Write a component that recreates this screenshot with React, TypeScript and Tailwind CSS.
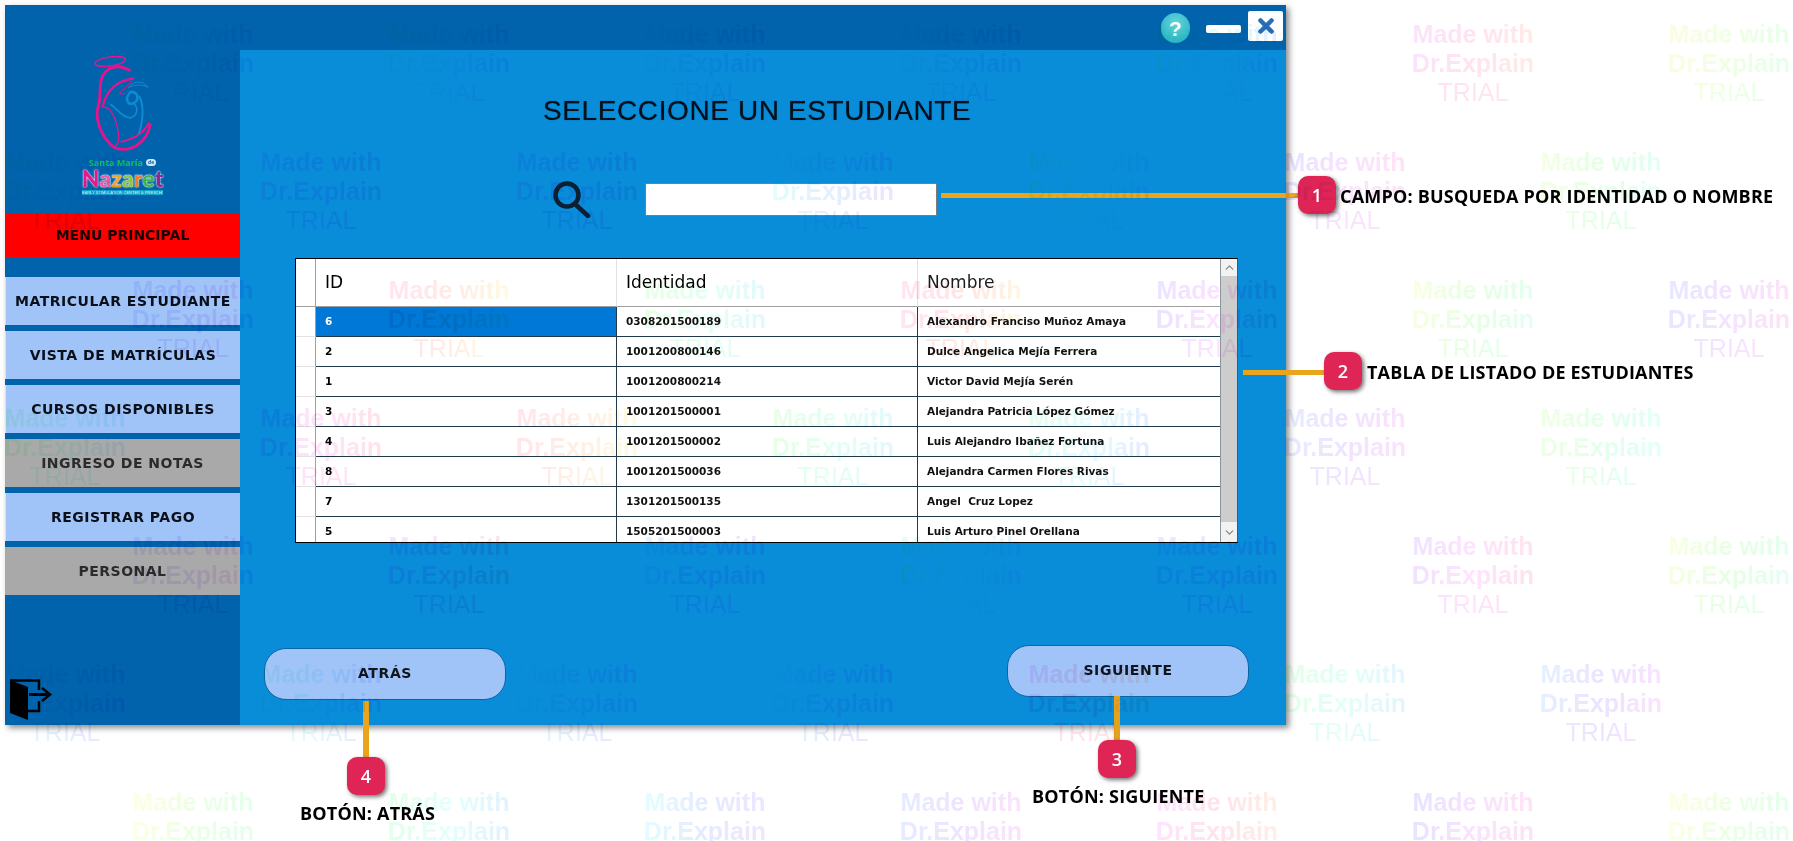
import { ChevronUp, ChevronDown, X } from "lucide-react";

const menu = [
  { label: "MATRICULAR ESTUDIANTE", on: true },
  { label: "VISTA DE MATRÍCULAS", on: true },
  { label: "CURSOS DISPONIBLES", on: true },
  { label: "INGRESO DE NOTAS", on: false },
  { label: "REGISTRAR PAGO", on: true },
  { label: "PERSONAL", on: false },
];

const rows = [
  ["6", "0308201500189", "Alexandro Franciso Muñoz Amaya"],
  ["2", "1001200800146", "Dulce Angelica Mejía Ferrera"],
  ["1", "1001200800214", "Victor David Mejía Serén"],
  ["3", "1001201500001", "Alejandra Patricia López Gómez"],
  ["4", "1001201500002", "Luis Alejandro Ibañez Fortuna"],
  ["8", "1001201500036", "Alejandra Carmen Flores Rivas"],
  ["7", "1301201500135", "Angel\u00a0\u00a0Cruz Lopez"],
  ["5", "1505201500003", "Luis Arturo Pinel Orellana"],
];

const nazaret: [string, string][] = [
  ["N", "text-[#e6178f]"],
  ["a", "text-[#ee5aa5]"],
  ["z", "text-[#f2a22c]"],
  ["a", "text-[#8cc63f]"],
  ["r", "text-[#ef7f22]"],
  ["e", "text-[#3fb54a]"],
  ["t", "text-[#92278f]"],
];

const hues = [
  [150, 150, 170, 170, 140, 290, 50],
  [150, 230, 230, 170, 130, 240, 80],
  [220, 330, 110, 320, 250, 70, 230],
  [120, 270, 340, 110, 140, 220, 90],
  [220, 270, 200, 130, 220, 260, 70],
  [170, 150, 170, 180, 300, 120, 210],
  [60, 130, 180, 220, 300, 240, 60],
];

function Logo() {
  return (
    <div className="flex flex-col items-center pt-[44px] h-[209px]">
      <svg width="64" height="105" viewBox="90 30 200 320" fill="none" strokeLinecap="round">
        <g stroke="#e6148c">
          <ellipse cx="150" cy="65" rx="48" ry="14" strokeWidth="5" transform="rotate(-8 150 65)" />
          <path d="M210 92 C172 70 132 84 122 122 C115 150 122 180 112 207 C102 245 120 292 152 325 C172 345 208 344 236 325 C256 311 270 292 275 262" strokeWidth="9" />
          <path d="M222 118 C182 124 144 142 128 200" strokeWidth="7" />
          <path d="M122 206 C152 204 168 240 176 290 C179 310 173 326 163 333" strokeWidth="4" />
          <path d="M184 316 C214 310 250 296 270 258" strokeWidth="6" />
          <path d="M220 120 C210 138 194 152 178 165 C186 168 192 167 199 163" strokeWidth="3" />
        </g>
        <g stroke="#0f8bd6">
          <path d="M208 146 C216 126 256 122 268 146 C254 136 224 136 208 146" strokeWidth="3" />
          <path d="M208 168 C196 184 206 202 222 196 C238 190 240 170 226 162 C218 158 212 160 208 168" strokeWidth="8" />
          <path d="M152 200 C172 212 188 242 214 241 C238 232 236 208 226 198" strokeWidth="5" />
          <path d="M241 174 C256 205 252 250 240 290" strokeWidth="6" />
        </g>
      </svg>
      <div className="flex items-center gap-[3px] h-[9px] mt-[4px] [font-family:'Open_Sans',sans-serif] text-[9px] leading-[9px] font-bold text-[#14c060]">
        <span>Santa María</span>
        <span className="rounded-full bg-[#cfe8f5] px-[2px] text-[5px] leading-[7px] text-[#1b5fa8]">de</span>
      </div>
      <div className="h-[22px] flex [font-family:'Lato',sans-serif] text-[23px] leading-[22px] font-black [text-shadow:0_0_1px_#fff,0_0_2px_#fff]">
        {nazaret.map(([c, cls], i) => (
          <span key={i} className={cls}>{c}</span>
        ))}
      </div>
      <div className="w-[81px] h-[5px] mt-[1px] bg-[#13a3c9] text-center text-[#d8f2fa] text-[4px] leading-[5px] whitespace-nowrap overflow-hidden [font-family:'Liberation_Sans',sans-serif]">
        EARLY STIMULATION CENTER & PRESCHOOL
      </div>
    </div>
  );
}

function ExitIcon() {
  return (
    <svg width="44" height="42" viewBox="0 0 44 42" fill="none" className="ml-[4px] mb-[4px]">
      <path d="M1 1 L19 8 V41 L1 34 Z" fill="#000" />
      <path d="M1 1.5 H30 V11 M30 22 V32 H18" stroke="#000" strokeWidth="2.5" />
      <path d="M20 15.5 H40" stroke="#000" strokeWidth="3" />
      <path d="M33 9 L41 15.5 L33 22" stroke="#000" strokeWidth="2.5" />
    </svg>
  );
}

function Sidebar() {
  return (
    <aside className="w-[235px] shrink-0 bg-[#0063ab] flex flex-col">
      <Logo />
      <div className="h-[43px] bg-[#ff0000] flex items-center justify-center text-[14px] font-bold text-[#1b0000]">
        MENU PRINCIPAL
      </div>
      <nav className="mt-[20px] flex flex-col gap-[6px]">
        {menu.map((m) => (
          <div
            key={m.label}
            className={
              "h-[48px] flex items-center justify-center text-[14px] font-bold tracking-[0.5px] " +
              (m.on
                ? "bg-[#a0c4f7] text-[#0a0f1a] border-l border-[#d5e4fa]"
                : "bg-[#a9a9a9] text-[#2b2b2b]")
            }
          >
            {m.label}
          </div>
        ))}
      </nav>
      <div className="mt-auto">
        <ExitIcon />
      </div>
    </aside>
  );
}

function DataTable() {
  return (
    <div className="ml-[55px] w-[943px] h-[285px] bg-white border border-black border-r-[#44586a] flex overflow-hidden">
      <div className="w-[924px] shrink-0 grid grid-cols-[20px_301px_301px_302px] grid-rows-[48px_repeat(8,30px)] content-start">
        <div className="border-r border-b border-[#a0a0a0]" />
        <div className="border-r border-b border-r-[#e2e2e2] border-b-[#a0a0a0] pl-[9px] flex items-center text-[17px] text-black">ID</div>
        <div className="border-r border-b border-r-[#e2e2e2] border-b-[#a0a0a0] pl-[9px] flex items-center text-[17px] text-black">Identidad</div>
        <div className="border-b border-[#a0a0a0] pl-[9px] flex items-center text-[17px] text-[#1c1c1c]">Nombre</div>
        {rows.map((r, i) => (
          <div key={r[0]} className="contents">
            <div className="border-r border-b border-r-[#a0a0a0] border-b-[#e2e2e2]" />
            <div
              className={
                "border-r border-b border-[#203a4c] pl-[9px] pt-[1px] flex items-center text-[10.5px] font-bold " +
                (i === 0 ? "bg-[#0078d7] text-white" : "text-black")
              }
            >
              {r[0]}
            </div>
            <div className="border-r border-b border-[#203a4c] pl-[9px] pt-[1px] flex items-center text-[10.5px] font-bold text-[#111]">
              {r[1]}
            </div>
            <div className="border-b border-[#203a4c] pl-[9px] pt-[1px] flex items-center text-[10.5px] font-bold text-[#111] whitespace-nowrap">
              {r[2]}
            </div>
          </div>
        ))}
      </div>
      <div className="flex-1 border-l border-[#8a96a0] bg-[#f2f2f2] flex flex-col">
        <div className="h-[17px] flex items-center justify-center text-[#8a8a8a]">
          <ChevronUp size={13} strokeWidth={2.5} />
        </div>
        <div className="h-[246px] bg-[#cdcdcd]" />
        <div className="flex-1 flex items-center justify-center text-[#8a8a8a]">
          <ChevronDown size={13} strokeWidth={2.5} />
        </div>
      </div>
    </div>
  );
}

function PillButton({ label, className }: { label: string; className: string }) {
  return (
    <div
      className={
        "w-[242px] h-[52px] rounded-[22px] bg-[#a0c4f7] border border-[#0b64a8] flex items-center justify-center text-[14px] font-bold tracking-[0.6px] text-[#10151f] pb-[2px] " +
        className
      }
    >
      {label}
    </div>
  );
}

function Panel() {
  return (
    <main className="flex-1 bg-[#0a8dd9] flex flex-col">
      <h1 className="ml-[303px] mt-[44px] h-[34px] text-[28px] leading-[34px] tracking-[0.6px] text-[#02101c] font-normal whitespace-nowrap [font-family:'Liberation_Sans',sans-serif] [text-shadow:0_0_1px_rgba(0,0,0,0.6)]">
        SELECCIONE UN ESTUDIANTE
      </h1>
      <div className="mt-[55px] ml-[312px] h-[33px] flex items-center gap-[54px]">
        <svg width="39" height="38" viewBox="0 0 39 38" fill="none" className="-mt-[2px]">
          <circle cx="15" cy="15" r="11.5" stroke="#0c1f33" strokeWidth="4.5" />
          <path d="M23 24 L36 36" stroke="#0c1f33" strokeWidth="4.5" strokeLinecap="round" />
        </svg>
        <div className="w-[292px] h-[33px] bg-white border border-[#7c7c7c]" />
      </div>
      <div className="mt-[42px]">
        <DataTable />
      </div>
      <div className="mt-[102px] ml-[24px] mr-[37px] flex justify-between items-start">
        <PillButton label="ATRÁS" className="mt-[3px]" />
        <PillButton label="SIGUIENTE" className="" />
      </div>
    </main>
  );
}

function Window() {
  return (
    <div className="w-[1281px] h-[720px] flex shadow-[3px_3px_6px_rgba(0,0,0,0.45)]">
      <Sidebar />
      <div className="flex-1 flex flex-col">
        <header className="h-[45px] bg-[#0063ab] flex items-start justify-end pr-[3px] pt-[6px]">
          <div className="mt-[2px] w-[29px] h-[30px] rounded-full bg-[radial-gradient(circle_at_50%_35%,#63d6dc,#1fa9c0)] flex items-center justify-center text-white font-bold text-[21px] leading-none [font-family:'Liberation_Sans',sans-serif]">
            ?
          </div>
          <div className="ml-[16px] mt-[14px] w-[35px] h-[8px] rounded-[2px] bg-white" />
          <div className="ml-[7px] w-[35px] h-[30px] rounded-[2px] bg-white flex items-center justify-center text-[#2a6fb5]">
            <X size={22} strokeWidth={5} />
          </div>
        </header>
        <Panel />
      </div>
    </div>
  );
}

const badgeCls =
  "absolute w-[38px] h-[38px] rounded-[10px] bg-[#de2556] text-white flex items-center justify-center text-[18px] font-semibold shadow-[2px_2px_4px_rgba(0,0,0,0.55)] [font-family:'Open_Sans',sans-serif]";
const labelCls =
  "absolute text-[18px] leading-[24px] font-bold tracking-[0.2px] text-black whitespace-nowrap [font-family:'Open_Sans',sans-serif]";

function Callouts() {
  return (
    <>
      <div className="absolute left-[941px] top-[193px] w-[358px] h-[5px] bg-[#eba51c]" />
      <div className={badgeCls + " left-[1298px] top-[176px]"}>1</div>
      <div className={labelCls + " left-[1340px] top-[184px]"}>CAMPO: BUSQUEDA POR IDENTIDAD O NOMBRE</div>

      <div className="absolute left-[1243px] top-[370px] w-[82px] h-[5px] bg-[#eba51c]" />
      <div className={badgeCls + " left-[1324px] top-[352px]"}>2</div>
      <div className={labelCls + " left-[1367px] top-[360px]"}>TABLA DE LISTADO DE ESTUDIANTES</div>

      <div className="absolute left-[1114px] top-[696px] w-[6px] h-[45px] bg-[#e3a31f]" />
      <div className={badgeCls + " left-[1098px] top-[740px]"}>3</div>
      <div className={labelCls + " left-[1032px] top-[784px]"}>BOTÓN: SIGUIENTE</div>

      <div className="absolute left-[363px] top-[701px] w-[6px] h-[57px] bg-[#eba51c]" />
      <div className={badgeCls + " left-[347px] top-[757px]"}>4</div>
      <div className={labelCls + " left-[300px] top-[801px]"}>BOTÓN: ATRÁS</div>
    </>
  );
}

function Watermarks() {
  const tiles: { x: number; y: number; h: number }[] = [];
  hues.forEach((line, row) => {
    const start = row % 2 === 0 ? 128 : 0;
    line.forEach((h, col) => {
      tiles.push({ x: start + col * 256, y: 20 + row * 128, h });
    });
  });
  return (
    <div className="absolute inset-0 overflow-hidden pointer-events-none">
      {tiles.map((t) => (
        <div
          key={t.x + "-" + t.y}
          className="absolute w-[130px] text-center opacity-[0.11] mix-blend-multiply text-[25px] leading-[29px] [font-family:'Liberation_Sans',sans-serif] bg-clip-text text-transparent"
          style={{
            left: t.x,
            top: t.y,
            backgroundImage: `linear-gradient(100deg, hsl(${t.h} 100% 50%), hsl(${t.h + 45} 100% 50%), hsl(${t.h + 90} 100% 50%))`,
          }}
        >
          <div className="font-bold">Made with</div>
          <div className="font-bold">Dr.Explain</div>
          <div>TRIAL</div>
        </div>
      ))}
    </div>
  );
}

export default function App() {
  return (
    <div className="relative w-[1793px] h-[841px] overflow-hidden bg-white pl-[5px] pt-[5px] [font-family:'DejaVu_Sans',sans-serif]">
      <Window />
      <Callouts />
      <Watermarks />
    </div>
  );
}
